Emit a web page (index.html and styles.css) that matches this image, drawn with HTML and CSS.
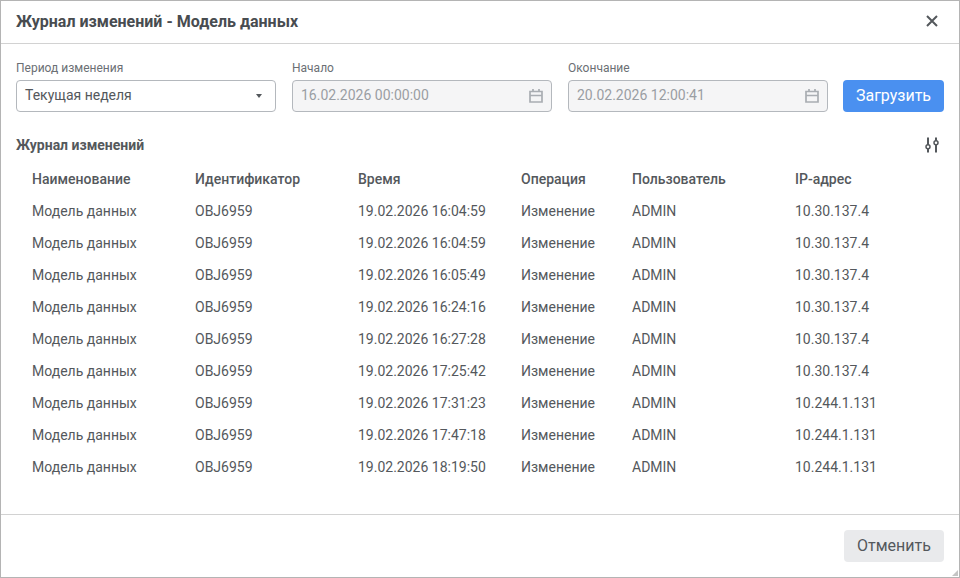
FILE: index.html
```html
<!DOCTYPE html>
<html lang="ru">

<head>
    <meta charset="UTF-8">
    <title>Журнал изменений</title>
    <link rel="stylesheet" href="styles.css">
</head>

<body>
    <div class="dialog">
        <header class="dialog-head">
            <h1 class="dialog-title">Журнал изменений - Модель данных</h1>
            <svg class="close-icon" width="14" height="14" viewBox="0 0 14 14">
                <path d="M2 2 12 12M12 2 2 12" stroke="#54585c" stroke-width="2" fill="none" />
            </svg>
        </header>

        <div class="dialog-body">
            <div class="filters">
                <div class="field">
                    <label class="field-label">Период изменения</label>
                    <div class="input">
                        <span class="input-text">Текущая неделя</span>
                        <span class="caret"></span>
                    </div>
                </div>
                <div class="field">
                    <label class="field-label">Начало</label>
                    <div class="input disabled">
                        <span class="input-text">16.02.2026 00:00:00</span>
                        <svg width="14" height="14" viewBox="0 0 14 14">
                            <path d="M1 2.5H13V13H1ZM1 6.5H13M4 0V3M10 0V3" stroke="#a9adb2" stroke-width="1.7" fill="none" />
                        </svg>
                    </div>
                </div>
                <div class="field">
                    <label class="field-label">Окончание</label>
                    <div class="input disabled">
                        <span class="input-text">20.02.2026 12:00:41</span>
                        <svg width="14" height="14" viewBox="0 0 14 14">
                            <path d="M1 2.5H13V13H1ZM1 6.5H13M4 0V3M10 0V3" stroke="#a9adb2" stroke-width="1.7" fill="none" />
                        </svg>
                    </div>
                </div>
                <button type="button" class="btn btn-primary">Загрузить</button>
            </div>

            <div class="section-head">
                <h2 class="section-title">Журнал изменений</h2>
                <svg width="16" height="16" viewBox="0 0 16 16">
                    <path d="M4 0.5V8M4 11.5V15.5M12 0.5V4M12 7.5V15.5" stroke="#54585c" stroke-width="2" fill="none" />
                    <circle cx="4" cy="9.7" r="2" stroke="#54585c" stroke-width="1.5" fill="none" />
                    <circle cx="12" cy="5.7" r="2" stroke="#54585c" stroke-width="1.5" fill="none" />
                </svg>
            </div>

            <table class="log">
                <thead>
                    <tr>
                        <th class="col-wide">Наименование</th>
                        <th class="col-wide">Идентификатор</th>
                        <th class="col-wide">Время</th>
                        <th class="col-narrow">Операция</th>
                        <th class="col-wide">Пользователь</th>
                        <th>IP-адрес</th>
                    </tr>
                </thead>
                <tbody>
                    <tr><td>Модель данных</td><td>OBJ6959</td><td>19.02.2026 16:04:59</td><td>Изменение</td><td>ADMIN</td><td>10.30.137.4</td></tr>
                    <tr><td>Модель данных</td><td>OBJ6959</td><td>19.02.2026 16:04:59</td><td>Изменение</td><td>ADMIN</td><td>10.30.137.4</td></tr>
                    <tr><td>Модель данных</td><td>OBJ6959</td><td>19.02.2026 16:05:49</td><td>Изменение</td><td>ADMIN</td><td>10.30.137.4</td></tr>
                    <tr><td>Модель данных</td><td>OBJ6959</td><td>19.02.2026 16:24:16</td><td>Изменение</td><td>ADMIN</td><td>10.30.137.4</td></tr>
                    <tr><td>Модель данных</td><td>OBJ6959</td><td>19.02.2026 16:27:28</td><td>Изменение</td><td>ADMIN</td><td>10.30.137.4</td></tr>
                    <tr><td>Модель данных</td><td>OBJ6959</td><td>19.02.2026 17:25:42</td><td>Изменение</td><td>ADMIN</td><td>10.30.137.4</td></tr>
                    <tr><td>Модель данных</td><td>OBJ6959</td><td>19.02.2026 17:31:23</td><td>Изменение</td><td>ADMIN</td><td>10.244.1.131</td></tr>
                    <tr><td>Модель данных</td><td>OBJ6959</td><td>19.02.2026 17:47:18</td><td>Изменение</td><td>ADMIN</td><td>10.244.1.131</td></tr>
                    <tr><td>Модель данных</td><td>OBJ6959</td><td>19.02.2026 18:19:50</td><td>Изменение</td><td>ADMIN</td><td>10.244.1.131</td></tr>
                </tbody>
            </table>
        </div>

        <footer class="dialog-foot">
            <button type="button" class="btn btn-cancel">Отменить</button>
        </footer>
        <span class="resize-grip"></span>
    </div>
</body>

</html>
```

FILE: styles.css
```css
html,
body {
    margin: 0;
    height: 100%;
}

body {
    font-family: Roboto, "Liberation Sans", sans-serif;
    font-size: 14px;
    color: #54585c;
    background: #fff;
}

.dialog {
    position: relative;
    box-sizing: border-box;
    height: 578px;
    display: flex;
    flex-direction: column;
    border: 1px solid #b4b4b4;
    background: #fff;
}

.dialog-head {
    box-sizing: border-box;
    height: 43px;
    flex: none;
    display: flex;
    align-items: center;
    justify-content: space-between;
    padding: 0 20px 2px 15px;
    border-bottom: 1px solid #d2d2d2;
}

.dialog-title {
    margin: 0;
    font-size: 16px;
    font-weight: 700;
    color: #484c50;
}

.close-icon {
    display: block;
}

.dialog-body {
    flex: 1;
    padding: 16px 15px 0;
}

.filters {
    display: flex;
    align-items: flex-end;
    gap: 16px;
}

.field {
    width: 260px;
}

.field-label {
    display: block;
    height: 20px;
    font-size: 12px;
    line-height: 16px;
    color: #6b6f74;
}

.input {
    box-sizing: border-box;
    height: 32px;
    display: flex;
    align-items: center;
    justify-content: space-between;
    padding: 0 8px;
    border: 1px solid #b4b8bd;
    border-radius: 4px;
}

.input-text {
    padding-bottom: 2px;
}

.input.disabled {
    background: #f5f5f6;
    color: #9a9ea3;
}

.caret {
    margin-right: 5px;
    border-left: 3px solid transparent;
    border-right: 3px solid transparent;
    border-top: 4px solid #54585c;
}

.btn {
    box-sizing: border-box;
    height: 32px;
    padding: 0 0 2px;
    border: none;
    border-radius: 4px;
    font-family: inherit;
    font-size: 16px;
}

.btn-primary {
    width: 101px;
    margin-left: -1px;
    background: #4a90f0;
    color: #fff;
}

.btn-cancel {
    width: 100px;
    background: #e9eaec;
    color: #54585c;
}

.section-head {
    display: flex;
    align-items: center;
    justify-content: space-between;
    height: 18px;
    margin-top: 24px;
    padding-right: 4px;
}

.section-title {
    margin: 0;
    font-size: 14px;
    font-weight: 700;
    color: #54585c;
}

.log {
    width: 928px;
    margin-top: 9px;
    border-collapse: collapse;
    table-layout: fixed;
}

.log th,
.log td {
    height: 32px;
    padding: 0 0 0 16px;
    text-align: left;
    white-space: nowrap;
}

.log th {
    font-weight: 500;
}

.col-wide {
    width: 147px;
}

.col-narrow {
    width: 95px;
}

.dialog-foot {
    box-sizing: border-box;
    height: 63px;
    flex: none;
    display: flex;
    justify-content: flex-end;
    align-items: flex-start;
    padding: 15px 15px 0;
    border-top: 1px solid #d2d2d2;
}

.resize-grip {
    position: absolute;
    right: 1px;
    bottom: 1px;
    border-left: 6px solid transparent;
    border-bottom: 6px solid #c4c4c4;
}
```
